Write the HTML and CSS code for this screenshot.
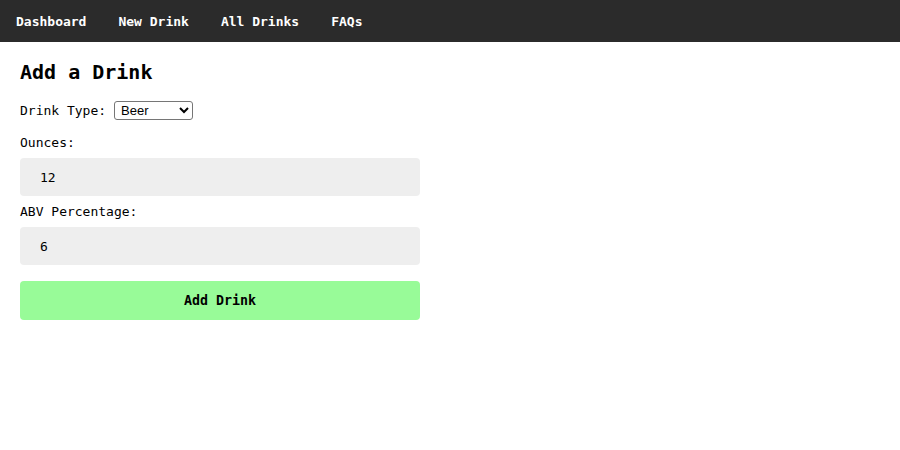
FILE: index.html
```html
<!DOCTYPE html>
<html>
<head>
<meta charset="utf-8">
<link rel="stylesheet" href="styles.css">
</head>
<body>
<nav class="navbar">
  <a class="nav-link" href="#">Dashboard</a>
  <a class="nav-link" href="#">New Drink</a>
  <a class="nav-link" href="#">All Drinks</a>
  <a class="nav-link" href="#">FAQs</a>
</nav>
<main class="content">
  <h2 class="title">Add a Drink</h2>
  <form class="drink-form">
    <div class="type-row">
      <label class="inline-label" for="type">Drink Type:</label>
      <select id="type" class="type-select">
        <option>Beer</option>
        <option>Wine</option>
        <option>Liquor</option>
      </select>
    </div>
    <label class="field-label" for="oz">Ounces:</label>
    <input id="oz" class="field-input" type="text" value="12">
    <label class="field-label" for="abv">ABV Percentage:</label>
    <input id="abv" class="field-input" type="text" value="6">
    <button class="submit-btn" type="button">Add Drink</button>
  </form>
</main>
</body>
</html>
```
FILE: styles.css
```css
html, body {
  margin: 0;
  padding: 0;
  background: #fff;
}
body {
  font-family: "DejaVu Sans Mono", "Liberation Mono", monospace;
  font-size: 13px;
  color: #000;
}
.navbar {
  display: flex;
  height: 42px;
  align-items: center;
  background: #2b2b2b;
}
.nav-link {
  padding: 0 16px;
  color: #fff;
  font-weight: bold;
  font-size: 13px;
  text-decoration: none;
}
.content {
  padding: 20px;
}
.title {
  margin: 0 0 19px;
  font-size: 20px;
  line-height: 20px;
  font-weight: bold;
}
.drink-form {
  display: flex;
  flex-direction: column;
  width: 400px;
}
.type-row {
  display: flex;
  align-items: center;
  gap: 8px;
  height: 19px;
  margin-bottom: 15px;
}
.inline-label {
  line-height: 15px;
}
.type-select {
  width: 79px;
  height: 19px;
  font-family: "Liberation Sans", Arial, sans-serif;
  font-size: 13px;
  border: 1px solid #767676;
  border-radius: 3px;
  background: #fff;
  color: #000;
  padding: 0 2px;
}
.field-label {
  line-height: 15px;
  margin-bottom: 8px;
}
.field-input {
  box-sizing: border-box;
  height: 38px;
  width: 400px;
  border: none;
  border-radius: 4px;
  background: #eee;
  padding: 0 20px;
  font-family: "DejaVu Sans Mono", monospace;
  font-size: 13px;
  color: #000;
  margin-bottom: 8px;
}
.submit-btn {
  margin-top: 8px;
  height: 39px;
  width: 400px;
  border: none;
  border-radius: 4px;
  background: #98fb98;
  font-family: "DejaVu Sans Mono", monospace;
  font-weight: bold;
  font-size: 13.33px;
  color: #000;
}
```
